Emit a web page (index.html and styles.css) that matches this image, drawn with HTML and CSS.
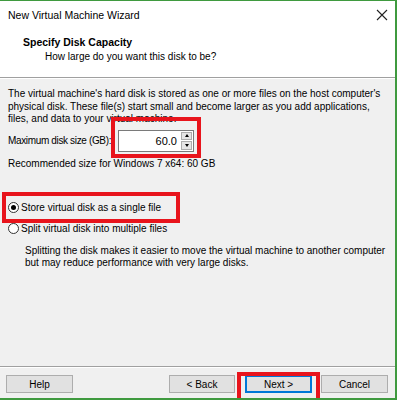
FILE: index.html
```html
<!DOCTYPE html>
<html>
<head>
<meta charset="utf-8">
<link rel="stylesheet" href="styles.css">
</head>
<body>
<div class="window">
  <div class="titlebar">
    <span class="title">New Virtual Machine Wizard</span>
    <svg class="close" width="12" height="12" viewBox="0 0 12 12"><path d="M1 1L11 11M11 1L1 11" stroke="#222" stroke-width="1.1" fill="none"/></svg>
  </div>
  <div class="header">
    <div class="h-title">Specify Disk Capacity</div>
    <div class="h-sub">How large do you want this disk to be?</div>
  </div>
  <div class="content">
    <p class="intro">The virtual machine's hard disk is stored as one or more files on the host computer's physical disk. These file(s) start small and become larger as you add applications, files, and data to your virtual machine.</p>
    <div class="size-row">
      <span class="label">Maximum disk size (GB):</span>
      <div class="spin">
        <div class="spin-value">60.0</div>
        <div class="spin-btns">
          <div class="spin-btn"><span class="tri up"></span></div>
          <div class="spin-btn"><span class="tri down"></span></div>
        </div>
      </div>
    </div>
    <div class="recommend">Recommended size for Windows 7 x64: 60 GB</div>
    <div class="radio-row first">
      <span class="radio checked"></span><span>Store virtual disk as a single file</span>
    </div>
    <div class="radio-row second">
      <span class="radio"></span><span>Split virtual disk into multiple files</span>
    </div>
    <p class="desc">Splitting the disk makes it easier to move the virtual machine to another computer but may reduce performance with very large disks.</p>
  </div>
  <div class="footer">
    <button class="btn help">Help</button>
    <div class="right-btns">
      <button class="btn back">&lt; Back</button>
      <div class="next-wrap">
        <button class="btn next">Next &gt;</button>
      </div>
      <button class="btn">Cancel</button>
    </div>
  </div>
  <div class="mark mark-spin"></div>
</div>
</body>
</html>
```
FILE: styles.css
```css
html, body {
  margin: 0;
  padding: 0;
  background: #ffffff;
}
body {
  font-family: "Liberation Sans", Tahoma, Arial, sans-serif;
  font-size: 10px;
  color: #000;
}
.window {
  width: 397px;
  height: 400px;
  box-sizing: border-box;
  border-top: 1px solid #3f9a3f;
  border-right: 2px solid #3f9a3f;
  border-bottom: 2px solid #3f9a3f;
  background: #f0f0f0;
  display: flex;
  flex-direction: column;
  position: relative;
  overflow: hidden;
}
.titlebar {
  height: 28px;
  background: #fff;
  display: flex;
  align-items: center;
  justify-content: space-between;
  padding: 0 7px 0 8px;
  font-size: 10.5px;
}
.header {
  background: #fff;
  height: 48px;
  padding-left: 23px;
  border-bottom: 1px solid #a0a0a0;
  box-shadow: 0 1px 0 #ffffff;
}
.h-title {
  font-weight: bold;
  font-size: 10.5px;
  margin-top: 7px;
  line-height: 13px;
}
.h-sub {
  padding-left: 22px;
  line-height: 13px;
  margin-top: 1px;
}
.content {
  padding: 10px 8px 0 8px;
}
.intro {
  margin: 0;
  line-height: 12.5px;
}
.size-row {
  display: flex;
  align-items: center;
  margin-top: 4px;
}
.label {
  width: 110px;
  white-space: nowrap;
  letter-spacing: -0.35px;
}
.spin {
  width: 74px;
  height: 20px;
  border: 1px solid #7a7a7a;
  background: #fff;
  display: flex;
}
.spin-value {
  flex: 1;
  text-align: right;
  line-height: 20px;
  padding-right: 4px;
  font-size: 11px;
}
.spin-btns {
  width: 11px;
  display: flex;
  flex-direction: column;
  gap: 1px;
  padding: 1px 1px 1px 0;
}
.spin-btn {
  flex: 1;
  background: #e5e5e5;
  border: 1px solid #adadad;
  display: flex;
  align-items: center;
  justify-content: center;
}
.tri {
  width: 0;
  height: 0;
  border-left: 2.5px solid transparent;
  border-right: 2.5px solid transparent;
}
.tri.up {
  border-bottom: 3px solid #000;
}
.tri.down {
  border-top: 3px solid #000;
}
.mark {
  position: absolute;
  border: 4px solid #e8141c;
  box-sizing: border-box;
}
.mark-spin {
  left: 111px;
  top: 116px;
  width: 90px;
  height: 41px;
}
.recommend {
  margin-top: 5px;
  line-height: 13px;
}
.radio-row {
  display: flex;
  align-items: center;
  gap: 2px;
}
.radio-row.first {
  margin: 22px 0 0 -6px;
  width: 178px;
  height: 31px;
  box-sizing: border-box;
  border: 4px solid #e8141c;
  padding-left: 2px;
}
.radio-row.second {
  margin-top: 0;
  height: 12px;
}
.radio {
  width: 11px;
  height: 11px;
  border-radius: 50%;
  border: 1px solid #333;
  background: #fff;
  box-sizing: border-box;
  position: relative;
  flex: none;
}
.radio.checked::after {
  content: "";
  position: absolute;
  left: 2px;
  top: 2px;
  width: 5px;
  height: 5px;
  border-radius: 50%;
  background: #000;
}
.desc {
  margin: 10px 0 0 17px;
  line-height: 12.5px;
}
.footer {
  margin-top: auto;
  border-top: 1px solid #a0a0a0;
  box-shadow: inset 0 1px 0 #ffffff;
  height: 32px;
  display: flex;
  align-items: flex-start;
  justify-content: space-between;
  padding: 8px 7px 0 6px;
  box-sizing: border-box;
}
.right-btns {
  display: flex;
  gap: 9px;
}
.btn {
  font-family: inherit;
  font-size: 10px;
  height: 18px;
  width: 67px;
  background: #e1e1e1;
  border: 1px solid #adadad;
  padding: 0;
  color: #000;
}
.btn.back {
  width: 66px;
  margin-right: 1px;
}
.next-wrap {
  position: relative;
}
.next-wrap::after {
  content: "";
  position: absolute;
  left: -8px;
  top: -3px;
  width: 83px;
  height: 30px;
  border: 4px solid #e8141c;
  box-sizing: border-box;
}
.btn.next {
  border: 1px solid #0078d7;
  box-shadow: inset 0 0 0 1px #0078d7;
}
```
